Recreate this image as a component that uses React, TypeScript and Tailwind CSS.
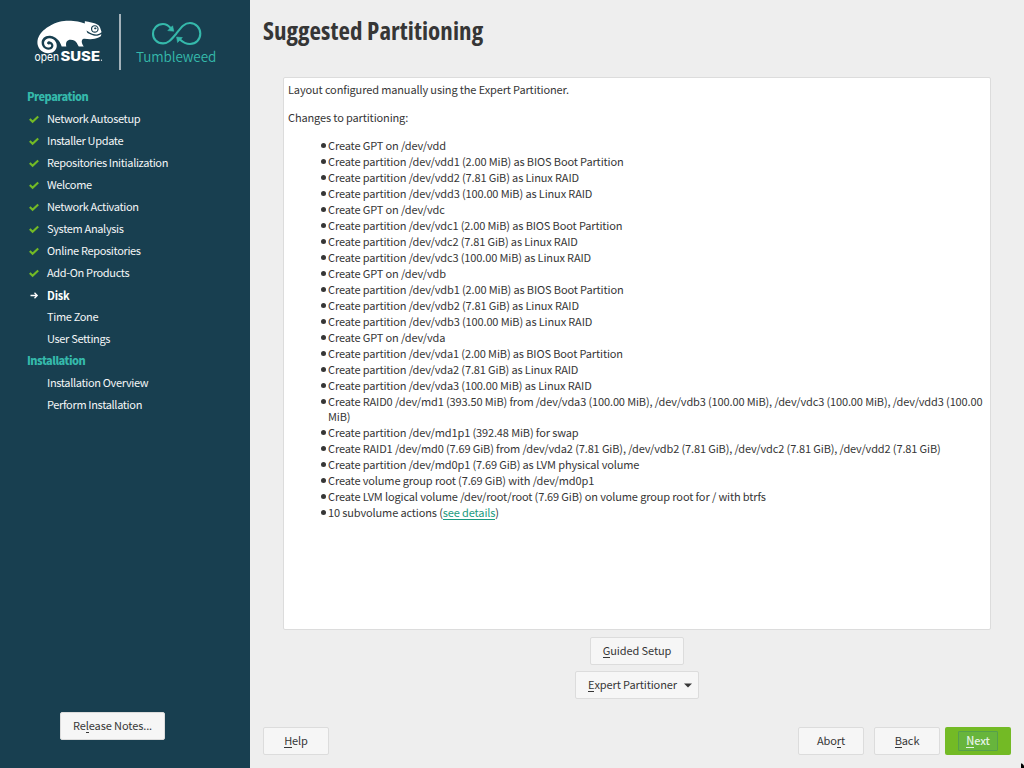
import type { ReactNode } from "react";
import { FaSuse } from "react-icons/fa";

const steps = [
  { label: "Network Autosetup", state: "done" },
  { label: "Installer Update", state: "done" },
  { label: "Repositories Initialization", state: "done" },
  { label: "Welcome", state: "done" },
  { label: "Network Activation", state: "done" },
  { label: "System Analysis", state: "done" },
  { label: "Online Repositories", state: "done" },
  { label: "Add-On Products", state: "done" },
  { label: "Disk", state: "current" },
  { label: "Time Zone", state: "todo" },
  { label: "User Settings", state: "todo" },
];

const installSteps = [
  { label: "Installation Overview", state: "todo" },
  { label: "Perform Installation", state: "todo" },
];

const actions = [
  "Create GPT on /dev/vdd",
  "Create partition /dev/vdd1 (2.00 MiB) as BIOS Boot Partition",
  "Create partition /dev/vdd2 (7.81 GiB) as Linux RAID",
  "Create partition /dev/vdd3 (100.00 MiB) as Linux RAID",
  "Create GPT on /dev/vdc",
  "Create partition /dev/vdc1 (2.00 MiB) as BIOS Boot Partition",
  "Create partition /dev/vdc2 (7.81 GiB) as Linux RAID",
  "Create partition /dev/vdc3 (100.00 MiB) as Linux RAID",
  "Create GPT on /dev/vdb",
  "Create partition /dev/vdb1 (2.00 MiB) as BIOS Boot Partition",
  "Create partition /dev/vdb2 (7.81 GiB) as Linux RAID",
  "Create partition /dev/vdb3 (100.00 MiB) as Linux RAID",
  "Create GPT on /dev/vda",
  "Create partition /dev/vda1 (2.00 MiB) as BIOS Boot Partition",
  "Create partition /dev/vda2 (7.81 GiB) as Linux RAID",
  "Create partition /dev/vda3 (100.00 MiB) as Linux RAID",
  "Create RAID0 /dev/md1 (393.50 MiB) from /dev/vda3 (100.00 MiB), /dev/vdb3 (100.00 MiB), /dev/vdc3 (100.00 MiB), /dev/vdd3 (100.00 MiB)",
  "Create partition /dev/md1p1 (392.48 MiB) for swap",
  "Create RAID1 /dev/md0 (7.69 GiB) from /dev/vda2 (7.81 GiB), /dev/vdb2 (7.81 GiB), /dev/vdc2 (7.81 GiB), /dev/vdd2 (7.81 GiB)",
  "Create partition /dev/md0p1 (7.69 GiB) as LVM physical volume",
  "Create volume group root (7.69 GiB) with /dev/md0p1",
  "Create LVM logical volume /dev/root/root (7.69 GiB) on volume group root for / with btrfs",
];

function Step({ label, state }: { label: string; state: string }) {
  return (
    <li className="flex h-[22px] items-center">
      <span className="flex w-5 pl-[2px]">
        {state === "done" && (
          <svg width="10" height="9" viewBox="0 0 10 9" fill="none" stroke="#73ba25" strokeWidth="2.1">
            <path d="M0.8 4 L3.6 6.800 L9.2 1.400" />
          </svg>
        )}
        {state === "current" && (
          <svg width="10" height="8" viewBox="0 0 10 8" fill="none" stroke="#fff" strokeWidth="1.3">
            <path d="M1.5 4.500 H8.300 M5.500 1.800 L8.200 4.500 L5.500 7.200" />
          </svg>
        )}
      </span>
      <span className={state === "current" ? "font-bold tracking-[-0.2px] text-white" : "pb-[2px] tracking-[-0.34px] text-[#f4f6f7]"}>
        {label}
      </span>
    </li>
  );
}

function StageTitle({ children }: { children: ReactNode }) {
  return <h2 className="h-[22px] leading-[21px] font-black tracking-[-0.5px] text-[#35b9ab]">{children}</h2>;
}

function Bullet({ children }: { children: ReactNode }) {
  return (
    <li className="mb-px flex">
      <span className="mt-[5px] mr-[2px] size-[5px] shrink-0 rounded-full bg-[#363636]" />
      <span>{children}</span>
    </li>
  );
}

function Key({ children }: { children: ReactNode }) {
  return <span className="h-[15px] border-b border-current">{children}</span>;
}

function Button({ className, children }: { className: string; children: ReactNode }) {
  return (
    <button
      className={`flex h-7 items-center justify-center rounded-[2px] border border-[#dcdcdc] bg-[#f6f6f6] pb-px leading-[15px] tracking-[-0.1px] whitespace-pre ${className}`}
    >
      {children}
    </button>
  );
}

function Logo() {
  return (
    <div className="flex h-[57px] pl-[34px]">
      <div className="flex w-[85px] flex-col">
        <FaSuse className="-mt-[3px] ml-[3px] h-[52px] w-[65px] text-white" />
        <svg className="-mt-[17px]" width="70" height="18" viewBox="0 0 70 18" fill="#fff">
          <text x="0.500" y="15" fontFamily="Inter, sans-serif" fontSize="12" textLength="24.5" lengthAdjust="spacingAndGlyphs">open</text>
          <text x="26.500" y="15" fontFamily="Inter, sans-serif" fontSize="13.2" fontWeight="800" textLength="39.5" lengthAdjust="spacingAndGlyphs">SUSE</text>
          <circle cx="67.5" cy="14.2" r="0.6" />
        </svg>
      </div>
      <div className="h-[56px] w-[2px] bg-[#a3b2ba]" />
      <div className="ml-[15px] flex flex-col">
        <svg className="mt-[7px] ml-[15px]" width="52" height="26" viewBox="151 21 52 26" fill="none" stroke="#35b9ab" strokeWidth="2.1">
          <path d="M170.5 28 C168 25 166 24 163 24 C157 24 153 28.500 153 33.700 C153 39 157 43.400 163 43.400 C168 43.400 171 40 176 34 C181 27.500 184 23 190 23 C196 23 200.300 28 200.300 33.500 C200.300 39.500 196 44 190 44 C186 44 183 42.500 180 39.500" />
          <path d="M173.800 31.200 L167.800 30.600 L172.600 25.800 Z M176.600 37 L182.400 37.600 L177.600 42.500 Z" fill="#35b9ab" strokeWidth="0.6" />
        </svg>
        <span className="-mt-px text-[13.5px] leading-[20px] font-[350] tracking-[-0.1px] text-[#35b9ab]">Tumbleweed</span>
      </div>
    </div>
  );
}

export default function App() {
  return (
    <div className="flex h-[768px] w-[1024px] overflow-hidden bg-[#eeeeee] font-['Noto_Sans_CJK_SC','Noto_Sans',sans-serif] text-[11px] text-[#363636]">
      <aside className="flex w-[250px] flex-col bg-[#183f50] pt-[14px] pb-7">
        <Logo />
        <nav className="mt-[15px] pl-[27px]">
          <StageTitle>Preparation</StageTitle>
          <ul>{steps.map((s) => <Step key={s.label} {...s} />)}</ul>
          <StageTitle>Installation</StageTitle>
          <ul>{installSteps.map((s) => <Step key={s.label} {...s} />)}</ul>
        </nav>
        <Button className="mx-auto mt-auto ml-[60px] w-[105px]">Re<Key>l</Key>ease Notes...</Button>
      </aside>

      <main className="relative flex flex-1 flex-col pl-[13px]">
        <h1 className="mt-[12px] h-9 w-max font-['Open_Sans',sans-serif] text-[25px] leading-9 font-bold tracking-[0.06px] [font-stretch:75%]">
          Suggested Partitioning
        </h1>
        <section className="mt-[29px] ml-5 h-[553px] w-[708px] rounded-[2px] border border-[#dcdcdc] bg-white px-1 pt-1 leading-[15px] tracking-[-0.132px]">
          <p>Layout configured manually using the Expert Partitioner.</p>
          <p className="mt-[13px]">Changes to partitioning:</p>
          <ul className="mt-[13px] pl-[33px]">
            {actions.map((a) => <Bullet key={a}>{a}</Bullet>)}
            <Bullet>
              10 subvolume actions (<a className="inline-block h-[15px] border-b border-[#1a9a80] text-[#1a9a80]">see details</a>)
            </Bullet>
          </ul>
        </section>
        <div className="ml-5 flex w-[708px] flex-col items-center gap-[6px] pt-[7px]">
          <Button className="w-[94px]"><Key>G</Key>uided Setup</Button>
          <Button className="w-[124px] pl-[6px]">
            <Key>E</Key>xpert Partitioner
            <svg className="mt-px ml-[7px]" width="8" height="5" viewBox="0 0 8 5" fill="#363636"><path d="M0 0.500 H8 L4 4.500 Z" /></svg>
          </Button>
        </div>
        <footer className="mt-[28px] flex pr-[13px]">
          <Button className="w-[66px]"><Key>H</Key>elp</Button>
          <Button className="ml-auto w-[66px]">Abo<Key>r</Key>t</Button>
          <Button className="ml-[10px] w-[66px]"><Key>B</Key>ack</Button>
          <button className="ml-[5px] flex h-7 w-[66px] items-center justify-center rounded-[2px] bg-[#73ba25] text-[#e4f3e4]">
            <span className="flex h-5 w-10 items-center justify-center rounded-[1px] border border-[#56a04b] bg-[#67b53c] pb-px leading-[15px] font-medium tracking-[-0.1px]">
              <Key>N</Key>ext
            </span>
          </button>
        </footer>
        <svg className="absolute right-0 bottom-0" width="4" height="5" viewBox="0 0 4 5" fill="#000"><path d="M1 0.500 H2 L4 2.500 V5 H1 Z" /></svg>
      </main>
    </div>
  );
}
